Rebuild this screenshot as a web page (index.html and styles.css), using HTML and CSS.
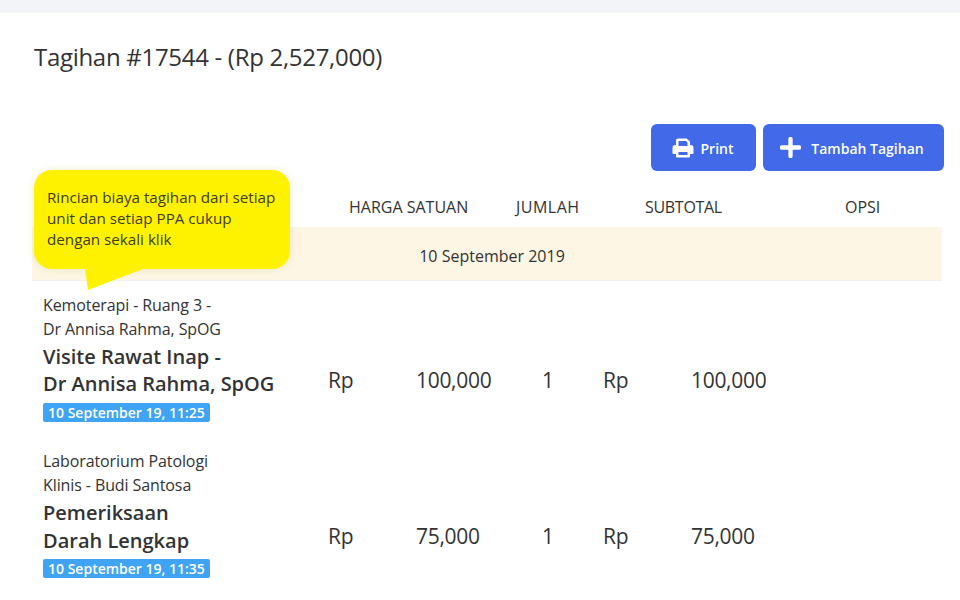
FILE: index.html
```html
<!DOCTYPE html>
<html lang="en">
<head>
    <meta charset="UTF-8">
    <title>Tagihan</title>
    <link rel="stylesheet" href="styles.css">
</head>
<body>
    <div class="topbar"></div>
    <div class="card">
        <h1>Tagihan #17544 - (Rp 2,527,000)</h1>
        <div class="actions">
            <button class="btn btn-print">
                <svg width="22" height="20" viewBox="0 0 22 20"><path fill="#fff" d="M4 7V2.500A2 2 0 0 1 6 .5h8.500L18 3.500V7h.5A3 3 0 0 1 21.500 10v5a1 1 0 0 1-1 1H18v2.500a1 1 0 0 1-1 1H5a1 1 0 0 1-1-1V16H1.500a1 1 0 0 1-1-1v-5A3 3 0 0 1 3.500 7zM6.500 3v5h9V4.500L14 3zM6.500 14v3h9v-3z"/></svg>
                <span>Print</span>
            </button>
            <button class="btn btn-add">
                <svg width="21" height="21" viewBox="0 0 22 22"><path stroke="#fff" stroke-width="4.500" stroke-linecap="round" d="M11 2v18M2 11h18"/></svg>
                <span>Tambah Tagihan</span>
            </button>
        </div>
        <div class="row head">
            <div></div>
            <div class="h-harga">HARGA SATUAN</div>
            <div class="h-jumlah">JUMLAH</div>
            <div class="h-subtotal">SUBTOTAL</div>
            <div class="h-opsi">OPSI</div>
        </div>
        <div class="date-row">10 September 2019</div>
        <div class="row item">
            <div class="info">
                <div class="unit">Kemoterapi - Ruang 3 -<br>Dr Annisa Rahma, SpOG</div>
                <div class="name">Visite Rawat Inap -<br>Dr Annisa Rahma, SpOG</div>
                <span class="stamp">10 September 19, 11:25</span>
            </div>
            <div class="money"><span class="rp">Rp</span><span>100,000</span></div>
            <div class="qty">1</div>
            <div class="money money-sub"><span class="rp">Rp</span><span>100,000</span></div>
            <div></div>
        </div>
        <div class="row item">
            <div class="info">
                <div class="unit">Laboratorium Patologi<br>Klinis - Budi Santosa</div>
                <div class="name name-tall">Pemeriksaan<br>Darah Lengkap</div>
                <span class="stamp stamp-tight">10 September 19, 11:35</span>
            </div>
            <div class="money"><span class="rp">Rp</span><span>75,000</span></div>
            <div class="qty">1</div>
            <div class="money money-sub"><span class="rp">Rp</span><span>75,000</span></div>
            <div></div>
        </div>
    </div>

    <!-- Tooltip over the table -->
    <div class="tip">Rincian biaya tagihan dari setiap unit dan setiap PPA cukup dengan sekali klik</div>
</body>
</html>
```

FILE: styles.css
```css
html, body {
    margin: 0;
    height: 600px;
    overflow: hidden;
}
body {
    font-family: "Open Sans", "Noto Sans", sans-serif;
    color: #333;
    background: #fff;
    position: relative;
}
.topbar {
    height: 13px;
    background: #f3f4f8;
}
.card {
    padding: 0 18px 0 32px;
}
h1 {
    margin: 0;
    padding: 26px 0 0 2px;
    height: 52px;
    font-size: 24px;
    line-height: 36px;
    font-weight: 400;
    letter-spacing: -0.3px;
}
.actions {
    display: flex;
    justify-content: flex-end;
    gap: 7px;
    margin: 33px -2px 0 0;
}
.btn {
    display: flex;
    align-items: center;
    justify-content: center;
    gap: 7px;
    height: 47px;
    padding: 0;
    border: 0;
    border-radius: 6px;
    background: #4169e8;
    color: #fff;
    font-family: inherit;
    font-size: 14px;
    font-weight: 600;
}
.btn span {
    padding-top: 2px;
}
.btn-print {
    width: 105px;
    padding-right: 2px;
}
.btn-add {
    width: 181px;
    gap: 10px;
    padding-right: 3px;
}
.row {
    display: grid;
    grid-template-columns: 296px 190px 74px 190px 160px;
}
.head {
    height: 40px;
    padding-top: 16px;
    align-items: center;
    font-size: 16px;
}
.h-harga {
    padding-left: 21px;
}
.h-jumlah {
    margin-left: -2px;
    letter-spacing: 0.5px;
}
.h-subtotal {
    padding-left: 53px;
    letter-spacing: -0.3px;
}
.h-opsi {
    padding-left: 63px;
}
.date-row {
    height: 54px;
    line-height: 58px;
    background: #fdf6e5;
    border-bottom: 1px solid #f0f0f0;
    box-sizing: border-box;
    text-align: center;
    font-size: 16px;
    padding-left: 10px;
}
.item {
    align-items: start;
    height: 156px;
}
.info {
    padding: 12px 0 0 11px;
}
.unit {
    font-size: 16px;
    line-height: 24px;
    letter-spacing: -0.1px;
}
.name {
    margin-top: 2px;
    font-size: 20px;
    line-height: 27px;
    font-weight: 600;
}
.name-tall {
    line-height: 28px;
}
.stamp {
    display: block;
    width: fit-content;
    margin-top: 6px;
    padding: 0 5px;
    height: 19px;
    line-height: 19px;
    border-radius: 2px;
    background: #3fa4f4;
    color: #fff;
    font-size: 14px;
    font-weight: 600;
}
.stamp-tight {
    margin-top: 4px;
}
.money, .qty {
    margin-top: 84px;
    font-size: 21px;
    line-height: 30px;
    letter-spacing: -0.3px;
}
.money {
    display: flex;
}
.rp {
    width: 88px;
}
.money-sub {
    padding-left: 11px;
}
.qty {
    padding-left: 24px;
}
.tip {
    position: absolute;
    left: 34px;
    top: 170px;
    width: 256px;
    height: 99px;
    box-sizing: border-box;
    padding: 17px 10px 0 13px;
    border-radius: 18px;
    background: #fff200;
    box-shadow: 0 0 8px rgba(200, 200, 120, 0.35);
    font-size: 15.200px;
    line-height: 21px;
    color: #3c3c20;
}
.tip::after {
    content: "";
    position: absolute;
    left: 51px;
    top: 99px;
    width: 58px;
    height: 21px;
    background: #fff200;
    clip-path: polygon(0 0, 100% 0, 3px 100%);
}
```
